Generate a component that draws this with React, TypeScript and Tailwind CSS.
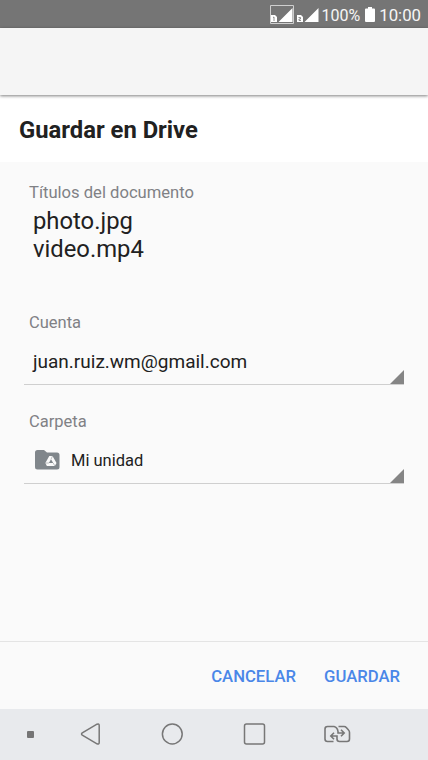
import type { ReactNode } from "react";

function Corner() {
  return (
    <svg className="h-3.5 w-3.5 shrink-0" viewBox="0 0 14 14" fill="#858585">
      <path d="M14 0v14H0z" />
    </svg>
  );
}

function Field({ label, children }: { label: string; children: ReactNode }) {
  return (
    <section className="h-[99px] shrink-0">
      <p className="pl-[5px] text-[16.5px] leading-6 text-[#808185]">{label}</p>
      <div className="mt-px flex h-[49px] items-end justify-between border-b border-[#cfcfcf]">
        <div className="flex h-full items-center pl-[9px] pt-[3px]">{children}</div>
        <Corner />
      </div>
    </section>
  );
}

function StatusBar() {
  return (
    <header className="flex h-7 shrink-0 items-center justify-end bg-[#757575] pr-[7px] pt-[2px] text-[#f5f5f5]">
      <svg className="mr-[3px]" width="50" height="20" viewBox="0 0 50 20" fill="none">
        <path d="M1.500 .5h23v18h-23z" stroke="#cfcfcf" />
        <path d="M9.500 17 23.500 3v14zM35.500 17 49.500 3v14z" fill="#fff" />
        <path d="M2 10h4l2 2v5H2zM28 10h4l2 2v5h-6z" fill="#fff" />
        <path d="M4 12.500l1-.5V16M29.500 12.500h2V14h-1.500v1.500h2" stroke="#757575" strokeWidth=".8" />
      </svg>
      <span className="pt-px text-[16px]">100%</span>
      <svg className="ml-[5px] mr-[4px] -mt-0.5" width="10" height="15" viewBox="0 0 10 15" fill="#fff">
        <path d="M3 0h4v1.500h2q1 0 1 1V14q0 1-1 1H1q-1 0-1-1V2.500q0-1 1-1h2z" />
      </svg>
      <span className="pt-px text-[16.800px]">10:00</span>
    </header>
  );
}

function NavigationBar() {
  return (
    <footer className="flex h-[51px] shrink-0 items-center bg-[#e8eaed] pb-px">
      <div className="ml-[27px] h-[7px] w-[7px] rounded-[1px] bg-[#757575]" />
      <svg className="ml-[46px]" width="22" height="24" viewBox="0 0 22 24" fill="none" stroke="#777" strokeWidth="1.5">
        <path d="M17 2.200 2.300 10.800q-1.500 1.200 0 2.400L17 21.800q2.200 1 2.200-1.300v-17q0-2.300-2.200-1.300z" />
      </svg>
      <svg className="ml-[58px]" width="24" height="24" viewBox="0 0 24 24" fill="none" stroke="#777" strokeWidth="1.5">
        <circle cx="12.300" cy="12" r="9.900" />
      </svg>
      <svg className="ml-[58px]" width="24" height="24" viewBox="0 0 24 24" fill="none" stroke="#777" strokeWidth="1.500">
        <rect x="2.500" y="2" width="20" height="20" rx="2" />
      </svg>
      <svg className="ml-[57px]" width="28" height="20" viewBox="0 0 28 20" fill="none" stroke="#777" strokeWidth="1.600">
        <path d="M10.500 17.500H4.500Q2 17.500 2 15V5q0-2.500 2.500-2.500H11q3.500 1 4 5v1.500h6M18 5.800l3.200 3.200-3.200 3.200" />
        <path d="M15.500 2.500H21q1.500 0 2.500 1.200l2 2.300q1 1 1 2.500V15q0 2.500-2.500 2.500h-7.500q-2.500 0-2.500-2.500v-3H8.500M11 8.800 7.800 12l3.200 3.200" />
      </svg>
    </footer>
  );
}

export default function App() {
  return (
    <div className="flex h-[760px] w-[428px] flex-col overflow-hidden bg-[#fafafa] font-['Roboto',sans-serif] text-[#212121]">
      <StatusBar />
      <div className="relative h-[67px] shrink-0 bg-[#f5f5f5] shadow-[0_1px_3px_rgba(0,0,0,0.5)]" />
      <div className="flex h-[67px] shrink-0 items-center bg-white pl-[19px] pt-[4px]">
        <h1 className="text-[23.8px] font-bold">Guardar en Drive</h1>
      </div>
      <main className="flex grow flex-col px-6 pt-[19px]">
        <section className="h-[130px] shrink-0">
          <p className="pl-[5px] text-[16.6px] leading-6 text-[#808185]">Títulos del documento</p>
          <p className="pl-[9px] pt-[2px] text-[23.8px] leading-7">photo.jpg<br />video.mp4</p>
        </section>
        <Field label="Cuenta">
          <span className="pt-px text-[19px]">juan.ruiz.wm@gmail.com</span>
        </Field>
        <Field label="Carpeta">
          <svg className="mb-[2px] ml-[2px] mr-[11px]" width="25" height="20" viewBox="0 0 25 20" fill="none">
            <path d="M2.500 0H9l3 2.500h10q2.500 0 2.500 2.500v12q0 2.500-2.500 2.500H2.500Q0 19.500 0 17V2.500Q0 0 2.500 0z" fill="#80868b" />
            <path d="M14.300 6h3.200l4 7-1.600 3h-8l-1.600-3zM16 9.200l-2.100 3.800h4.300z" fill="#fafafa" fillRule="evenodd" />
            <path d="m17.500 6-1.500 3.200M10.300 13h3.600M18.200 13l1.700 3" stroke="#80868b" strokeWidth=".5" />
          </svg>
          <span className="pt-[2px] text-[16.500px]">Mi unidad</span>
        </Field>
      </main>
      <div className="flex h-[68px] shrink-0 items-center justify-end gap-7 border-t border-[#e4e4e4] pr-7 pt-[2px] text-[16.700px] font-medium text-[#4a87e8]">
        <button>CANCELAR</button>
        <button>GUARDAR</button>
      </div>
      <NavigationBar />
    </div>
  );
}
